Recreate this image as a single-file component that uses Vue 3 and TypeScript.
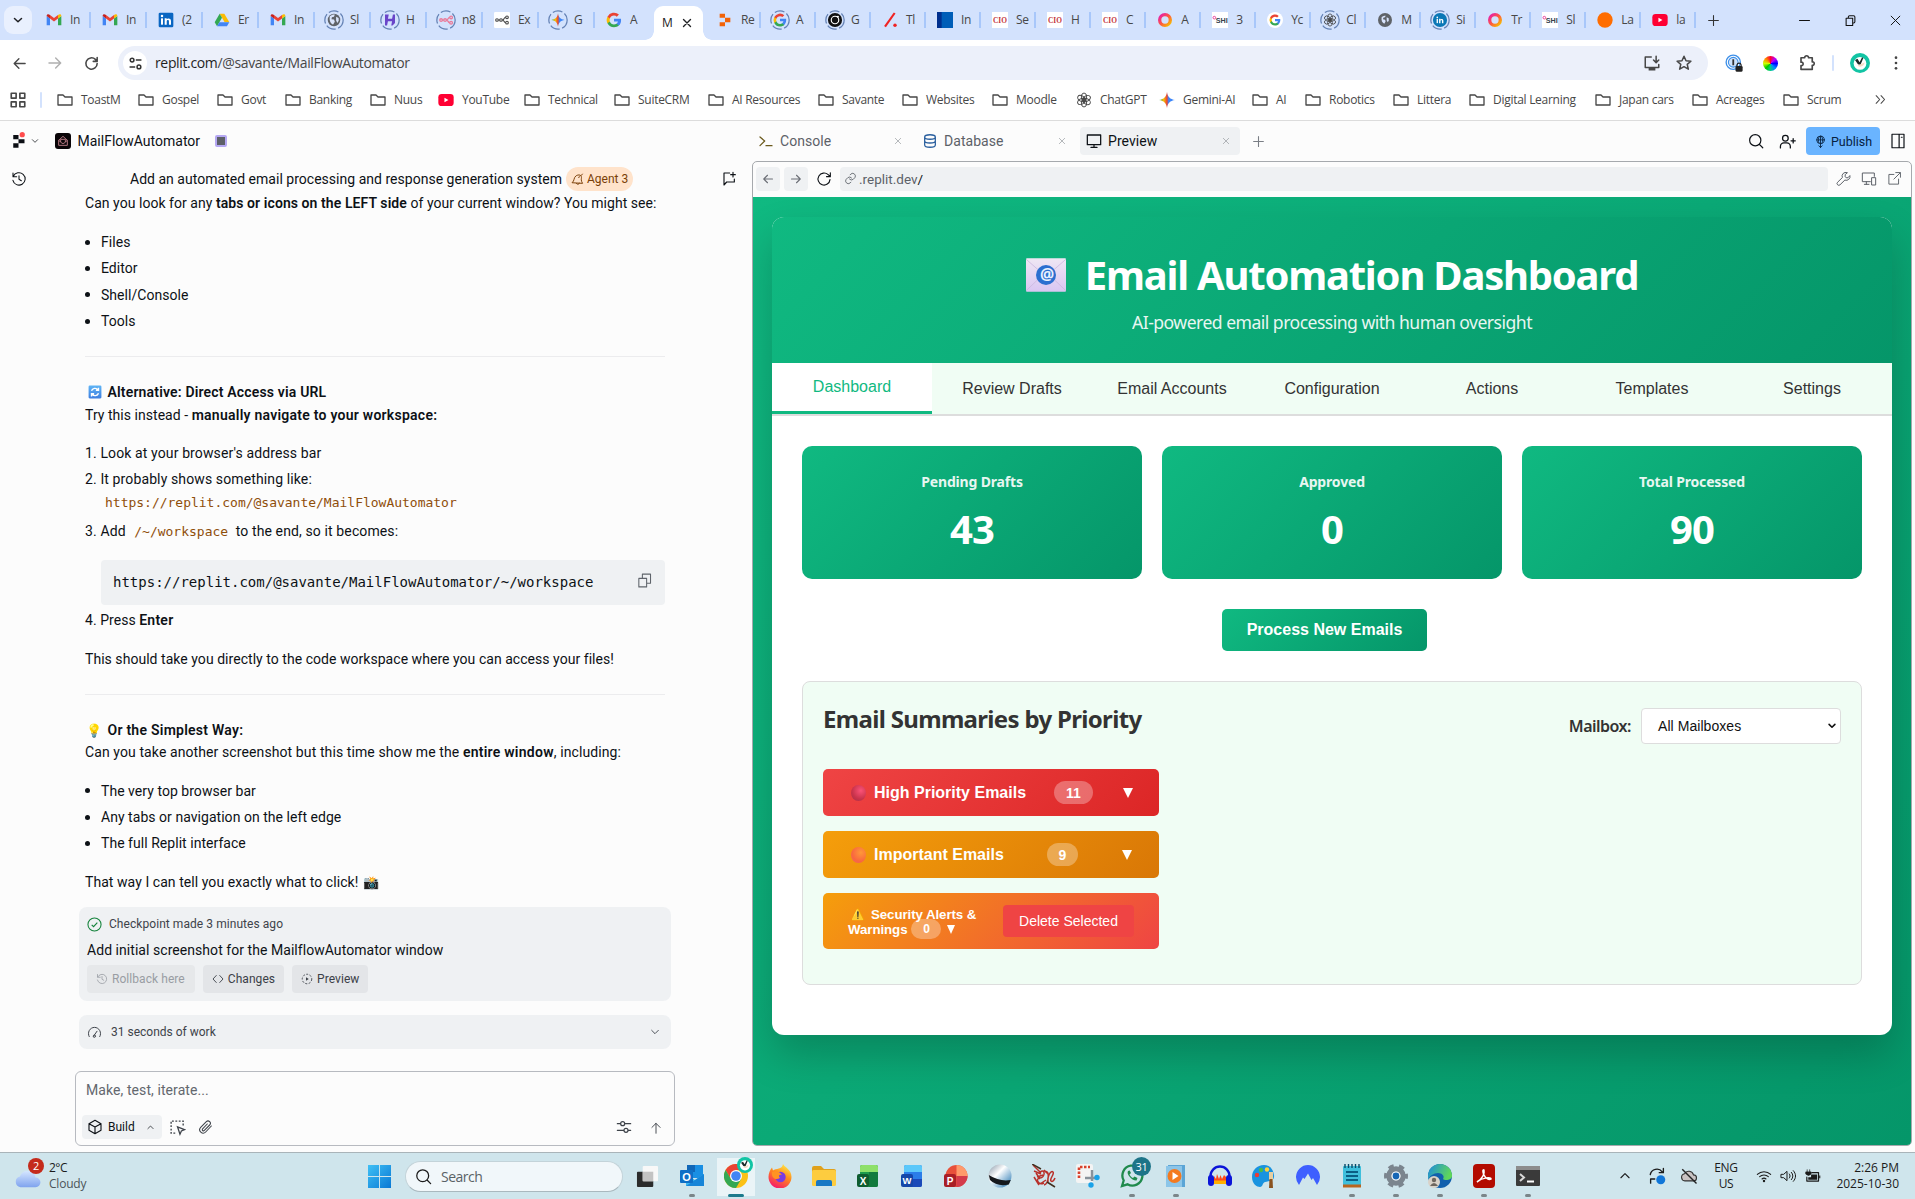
<script setup lang="ts">
import { h, type FunctionalComponent } from 'vue'

const line = (d: string, w = 1.6) =>
  `<path d="${d}" fill="none" stroke="currentColor" stroke-width="${w}" stroke-linecap="round" stroke-linejoin="round"/>`
const ring =
  '<circle cx="12" cy="12" r="11" fill="none" stroke="#6482b5" stroke-width="1.5" stroke-dasharray="12 3"/>'
const gLogo = (s: string) =>
  `<g transform="${s}"><path d="M22.6 12.2c0-.8-.1-1.500-.2-2.200H12v4.300h5.900a5 5 0 0 1-2.200 3.300v2.800h3.600c2.100-1.900 3.300-4.800 3.300-8.200z" fill="#4285f4"/><path d="M12 23c3 0 5.500-1 7.300-2.600l-3.600-2.800c-1 .7-2.300 1.100-3.700 1.100-2.900 0-5.300-1.900-6.200-4.600H2.200V17A11 11 0 0 0 12 23z" fill="#34a853"/><path d="M5.800 14.100a6.600 6.600 0 0 1 0-4.200V7H2.200a11 11 0 0 0 0 10z" fill="#fbbc05"/><path d="M12 5.400c1.600 0 3.100.6 4.200 1.600l3.200-3.100A11 11 0 0 0 2.200 7l3.600 2.900C6.700 7.300 9.100 5.400 12 5.400z" fill="#ea4335"/></g>`
const spark =
  '<defs><linearGradient id="sp" x1="0" y1="0" x2="1" y2="0"><stop offset="0" stop-color="#34a853"/><stop offset=".3" stop-color="#fbbc05"/><stop offset=".5" stop-color="#ea4335"/><stop offset=".6" stop-color="#4285f4"/><stop offset="1" stop-color="#3186ff"/></linearGradient></defs>'
const knot =
  '<g fill="none" stroke="#444" stroke-width="1.400"><ellipse cx="12" cy="7.500" rx="4" ry="6"/><ellipse cx="12" cy="7.500" rx="4" ry="6" transform="rotate(60 12 12)"/><ellipse cx="12" cy="7.500" rx="4" ry="6" transform="rotate(120 12 12)"/><ellipse cx="12" cy="7.500" rx="4" ry="6" transform="rotate(180 12 12)"/><ellipse cx="12" cy="7.500" rx="4" ry="6" transform="rotate(240 12 12)"/><ellipse cx="12" cy="7.500" rx="4" ry="6" transform="rotate(300 12 12)"/></g>'
const globeFill = (r: number) =>
  `<circle cx="12" cy="12" r="${r}" fill="#5f6368"/><path d="M7 7.500c2-1.500 4-2 6-2l-1 2.500-2.500.8L9 11l3 .5 1 2.500-2 3.500C8 16.500 6 13 7 7.500zM14.500 8l3 1.500.2 3.500-1.700 2.500-1.500-3z" fill="#d9e4fb"/>`
const txt = (x: number, y: number, s: number, c: string, t: string, f = 'Liberation Serif', extra = '') =>
  `<text x="${x}" y="${y}" font-size="${s}" font-weight="700" font-family="${f}" fill="${c}" text-anchor="middle" ${extra}>${t}</text>`
const n8n = (c: string, sw: number) =>
  `<g fill="none" stroke="${c}" stroke-width="${sw}"><circle cx="4.500" cy="12" r="2"/><circle cx="10.500" cy="12" r="2"/><circle cx="19.500" cy="8" r="2"/><circle cx="19.500" cy="16" r="2"/><path d="M6.500 12h2M12.500 12c3 0 2-4 5-4M12.500 12c3 0 2 4 5 4"/></g>`
const cio = `<rect x="0" y="0" width="24" height="24" fill="#fff"/>${txt(12, 16.5, 13, '#c4373c', 'CIO', 'Liberation Serif', 'textLength="21" lengthAdjust="spacingAndGlyphs"')}`
const shi = `<rect x="0" y="0" width="24" height="24" fill="#fff"/><circle cx="3.500" cy="8.500" r="2" fill="none" stroke="#e5218a" stroke-width="1.200"/>${txt(14.500, 16.5, 10.5, '#37424d', 'SHI', 'Liberation Sans', 'textLength="18" lengthAdjust="spacingAndGlyphs"')}`
const ringO =
  '<defs><linearGradient id="ro" x1="0" y1="0" x2="1" y2="1"><stop offset="0" stop-color="#e61bb0"/><stop offset=".5" stop-color="#ff5a3c"/><stop offset="1" stop-color="#f5c400"/></linearGradient></defs><circle cx="12" cy="12" r="8" fill="none" stroke="url(#ro)" stroke-width="5"/>'
const youtube =
  '<rect x="0.500" y="3" width="23" height="18" rx="5" fill="#ff0033"/><path d="M9.700 8.500v7l6-3.500z" fill="#fff"/>'
const linkedin = (c: string) =>
  `<rect x="1" y="1" width="22" height="22" rx="2" fill="${c}"/><rect x="4.500" y="9.500" width="3" height="9.500" fill="#fff"/><circle cx="6" cy="6" r="1.900" fill="#fff"/><path d="M10 9.500h3v1.400c1-1.700 6.500-2.400 6.500 2.600V19h-3.100v-5c0-2.700-3.300-2.400-3.300 0v5H10z" fill="#fff"/>`

const icons: Record<string, string> = {
  gmail:
    '<path d="M1 20V6l5 3.800V20z" fill="#4285f4"/><path d="M18 20V9.800L23 6v14z" fill="#34a853"/><path d="M18 4.500v5.300L23 6c0-3-2.800-3.200-5-1.500z" fill="#fbbc04"/><path d="M1 6c0-3 2.800-3.200 5-1.500v5.300z" fill="#c5221f"/><path d="M6 4.500 12 9l6-4.500v5.300L12 14.300 6 9.800z" fill="#ea4335"/>',
  linkedin: linkedin('#0a66c2'),
  drive:
    '<path d="M8.500 2.500h7L23 15.500h-7z" fill="#fbbc04"/><path d="M8.500 2.500 12 8.600 4.600 21.500 1 15.500z" fill="#34a853"/><path d="M8 15.500h15l-3.600 6H4.600z" fill="#4285f4"/>',
  globeRing: ring + globeFill(7.5),
  globe: globeFill(10.5),
  hRing: ring + '<path d="M6 5.500h4.500l-1 5h5l1-5H18v10l-3 3h-1.500l1-5h-5l-1 5H6z" fill="#6a45c9"/>',
  n8nRing: ring + '<g transform="translate(2.500 2.500) scale(.8)">' + n8n('#ea7b9a', 2) + '</g>',
  n8nBox: '<rect width="24" height="24" rx="2" fill="#fff"/>' + n8n('#444', 1.6),
  gemRing: ring + spark + '<path d="M12 4c.8 5 3 7.200 8 8-5 .8-7.200 3-8 8-.8-5-3-7.200-8-8 5-.8 7.200-3 8-8z" fill="url(#sp)"/>',
  gemini: spark + '<path d="M12 0c1.200 7.500 4.500 10.800 12 12-7.500 1.200-10.800 4.500-12 12C10.800 16.500 7.500 13.200 0 12 7.500 10.800 10.800 7.500 12 0z" fill="url(#sp)"/>',
  google: gLogo(''),
  googleRing: ring + gLogo('translate(3.6 3.600) scale(.7)'),
  googleWhite: '<circle cx="12" cy="12" r="12" fill="#fff"/>' + gLogo('translate(3 3) scale(.75)'),
  replit: '<path d="M4 2.500h8v6.300H4zM12 8.800h8v6.400h-8zM4 15.200h8v6.300H4z" fill="#f26207"/>',
  lens: ring + '<circle cx="12" cy="12" r="8.500" fill="#111"/><circle cx="12" cy="12" r="4.500" fill="none" stroke="#fff" stroke-width="1.400"/><circle cx="15.500" cy="8" r="1.200" fill="#fff"/>',
  slash: '<path d="M19 1.500 4.500 22" stroke="#f02323" stroke-width="3.200"/><circle cx="19.500" cy="20" r="2.600" fill="#f02323"/>',
  blue: '<rect width="24" height="24" fill="#005eb8"/><rect width="7" height="24" fill="#00308f"/>',
  cio,
  shi,
  ringO,
  gptRing: ring + `<g transform="translate(3.600 3.600) scale(.7)">${knot}</g>`,
  gpt: knot,
  liRing: ring + `<circle cx="12" cy="12" r="8.500" fill="#0a77b5"/><g transform="translate(5.500 5.500) scale(.54)">${linkedin('none')}</g>`,
  orange: '<circle cx="12" cy="12" r="11.500" fill="#ff6d00"/>',
  youtube,
  down: line('m6 9.500 6 5.500 6-5.500', 2.6),
  chev: line('m4 8 8 8 8-8', 2.2),
  chevUp: line('m5 15 7-7 7 7', 1.9),
  close: line('M5 5l14 14M19 5 5 19', 2.800),
  closeThin: line('M4 4l16 16M20 4 4 20', 1.8),
  plus: line('M12 3v18M3 12h18', 2),
  min: line('M4 12h16', 1.6),
  restore: line('M5 8.500h10.500V20H5zM8.500 8V6.500Q8.500 4.500 10.500 4.500H17q2 0 2 2V14q0 2-2 2', 1.7),
  back: line('M21 12H4M11 4.500 3.500 12l7.500 7.500', 2.2),
  fwd: line('M3 12h17M13 4.500l7.500 7.500-7.500 7.500', 2.2),
  reload: line('M20 12a8 8 0 1 1-2.500-5.800L20 9M20 3.500V9h-5.500', 2.2),
  reloadThin: line('M21 13a9 9 0 1 1-2.800-7.500L21.500 8.500M21.500 2.800v5.700h-5.700', 1.7),
  tune: '<g fill="none" stroke="#333" stroke-width="2.400"><circle cx="6.500" cy="6.500" r="3"/><path d="M12.500 6.500h9M2.500 17.500h9"/><circle cx="17.500" cy="17.500" r="3"/></g>',
  folder: line('M1.500 19.500v-15h7.500l3 3h10.500v12z', 2),
  grid: line('M3 3h6.500v6.500H3zM14.500 3H21v6.500h-6.500zM3 14.500h6.500V21H3zM14.500 14.500H21V21h-6.500z', 2.2),
  install: line('M11 4H3v14h18v-4M17.500 3v8M14 8l3.500 3.500L21 8', 2) + '<path d="M7.500 18h9v4h-9z" fill="currentColor"/>',
  star: line('m12 3 2.700 6 6.500.6-4.900 4.300 1.500 6.400L12 16.900l-5.800 3.400 1.500-6.400-4.900-4.300 6.500-.6z', 2),
  onepass: '<circle cx="11" cy="11" r="9.500" fill="#fff" stroke="#3d8fe8" stroke-width="1.800"/><circle cx="11" cy="11" r="6.500" fill="#cfe3fb" stroke="#3d8fe8" stroke-width="1.400"/><path d="M11 7v8" stroke="#333" stroke-width="2.400"/><rect x="14" y="16" width="9.500" height="7.500" rx="1.500" fill="#222"/><path d="M16 16v-1.500a2.800 2.800 0 0 1 5.500 0V16" fill="none" stroke="#222" stroke-width="1.600"/>',
  puzzle: line('M4 5h5c-.8-3.500 5.800-3.500 5 0h5v5.500c3.500-.8 3.500 5.300 0 4.500V20.500H4V15.500c3.800.8 3.800-5.300 0-4.500z', 2.2),
  dots: '<circle cx="12" cy="4" r="2" fill="#444"/><circle cx="12" cy="12" r="2" fill="#444"/><circle cx="12" cy="20" r="2" fill="#444"/>',
  more: line('m4 5 6.500 7L4 19M13 5l6.500 7-6.500 7', 2),
  avatar: '<circle cx="12" cy="12" r="12" fill="#12c4a4"/><circle cx="12" cy="12.500" r="7.600" fill="#fff"/><path d="M6 8.500 9 7l2.500 4L14.500 5l1.500 1-3.500 8.500-3-1z" fill="#1c2c2a"/><path d="M9 15c3 3 8 1 8.500-3.500L14 13z" fill="#f6dcc6"/>',
  replitDark: '<path d="M3 4h7v5.500H3zM10 9.500h8v5.500h-8zM3 15h7v6H3z" fill="#0c0f14"/><circle cx="15" cy="3.500" r="3.500" fill="#ff4d4d"/>',
  mailBox: '<rect width="24" height="24" rx="4.500" fill="#0a0508"/><path d="M5.500 11 12 5l6.500 6v7.500h-13zM5.500 11l3 2.500v-4h7v4l3-2.500M8.500 14l3.500 2 3.500-2" fill="none" stroke="#d9909c" stroke-width="1.200"/>',
  console: line('m3 6 7 6-7 7M12 19h9', 1.9),
  db: line('M4 6c0-4.500 16-4.500 16 0s-16 4.500-16 0v12c0 4.500 16 4.500 16 0V6M4 12c0 4 16 4 16 0', 1.9),
  monitor: line('M2 3h20v14.500H2zM12 17.500v4M7.500 21.700h9', 1.9),
  search: line('M18.500 11a7.500 7.500 0 1 1-15 0 7.500 7.500 0 0 1 15 0M16.500 16.500 21 21', 1.6),
  userPlus: line('M13 7.500a4 4 0 1 1-8 0 4 4 0 0 1 8 0M2 21v-2a5 5 0 0 1 5-5h4a5 5 0 0 1 5 5v2M20 8v6M17 11h6', 1.8),
  publish: line('M19 9a7 7 0 1 1-14 0 7 7 0 0 1 14 0M5 9h14M12 2v21M9 14.500C7.500 11 7.500 6 10 2.500M15 14.500C16.500 11 16.500 6 14 2.500M9 20l3 3 3-3', 1.6),
  sidebar: line('M4 3h16v18H4zM13.500 3v18M16.500 7h1', 1.6),
  history: line('M3.500 8a9.300 9.300 0 1 1-.6 6M3 3v5.500h5.500M12 7v5.500l3.500 2', 1.6),
  chatPlus: line('M13 3H4.500v18l4-4.500H20V12M18 2v7M14.500 5.500h7', 1.7),
  bell: line('M10 19.500c2 2.500 5 1.500 5.500-.9M2.500 17.500C7 14 4.500 9 9 5.500c2-1.500 5-2.500 8-1.500 3.500 2.500 2 6 2 8.500 0 2.500 1 4 2 6zM19 4.500 21 2M14 8l2-1', 1.8),
  copy: line('M4 9h11v12H4zM9 8.500V3h11.500v13H16', 1.5),
  check: '<circle cx="12" cy="12" r="10.500" fill="none" stroke="#14833b" stroke-width="1.700"/><path d="m7.500 12.500 3 3 6-6.500" fill="none" stroke="#14833b" stroke-width="1.800"/>',
  code: line('M8.500 5 2 12l6.500 7M15.500 5l6.500 7-6.500 7', 1.8),
  playDash: '<circle cx="12" cy="12" r="9.500" fill="none" stroke="currentColor" stroke-width="1.800" stroke-dasharray="4 3"/><path d="M10 8.500v7l5.500-3.500z" fill="currentColor"/>',
  gauge: line('M3.500 18.500a9.800 9.800 0 1 1 17 0M11.500 16.500 16 10M13.500 17.500a1.800 1.800 0 1 1-3.500 0 1.800 1.800 0 0 1 3.500 0', 1.6),
  cube: line('M12 2 21 7v10l-9 5-9-5V7zM3 7l9 5 9-5M12 12v10', 1.7),
  select: '<path d="M20 9V3H3v17h6" fill="none" stroke="currentColor" stroke-width="1.900" stroke-dasharray="2.600 2.200"/><path d="m12 11 10 4-4.500 2-2 4.500z" fill="none" stroke="currentColor" stroke-width="1.800"/>',
  clip: line('m20 10.500-8.500 9A5 5 0 0 1 4 12.500L12.500 4a3.400 3.400 0 0 1 5 5l-8 8.200a1.700 1.700 0 0 1-2.600-2.400l7-7.300', 1.600),
  sliders: line('M2 7h5M13 7h9M13 7a3 3 0 1 1-6 0 3 3 0 0 1 6 0M2 17h10M18 17h4M18 17a3 3 0 1 1-6 0 3 3 0 0 1 6 0', 1.8),
  up: line('M12 21V4M5 11l7-7 7 7', 1.6),
  link: line('M10 13a5 5 0 0 0 7 .5l3-3a5 5 0 0 0-7-7l-1.700 1.700M14 11a5 5 0 0 0-7-.5l-3 3a5 5 0 0 0 7 7l1.700-1.700', 1.6),
  wrench: line('M14.700 6.300v3l1.500 1.500h3l3-3.500a6 6 0 0 1-8 7.200L6.500 22a2.500 2.500 0 0 1-4-4l7.700-7.500a6 6 0 0 1 7.500-8z', 1.6),
  devices: line('M14 16H2V3h18v5M8 16v4M5 20h7M16.500 10h5.500v11h-5.500z', 1.5),
  external: line('M18.500 13v8H3V5.500h8M14 2.500h7.500V10M21 3 11 13', 1.5),
  caret: line('m5 8 7 7 7-7', 3.8),
  recycle: '<defs><linearGradient id="rc" x1="0" y1="0" x2="0" y2="1"><stop offset="0" stop-color="#5fb4f5"/><stop offset="1" stop-color="#3f7fe0"/></linearGradient></defs><rect x="1" y="1" width="22" height="22" rx="2" fill="url(#rc)"/><path d="M6 10a6.500 6.500 0 0 1 11-2M18 4.500V9h-4.500M18 14a6.500 6.500 0 0 1-11 2M6 19.500V15h4.500" fill="none" stroke="#fff" stroke-width="2.400"/>',
  envelope: '<defs><linearGradient id="en" x1="0" y1="0" x2="0" y2="1"><stop offset="0" stop-color="#efe7f4"/><stop offset="1" stop-color="#d9c6f2"/></linearGradient></defs><rect x="0" y="2" width="24" height="20" rx=".6" fill="url(#en)"/><path d="M0 2.500 12 13 24 2.500M0 21.500 10 12M24 21.500 14 12" fill="none" stroke="#cbb8de" stroke-width=".5"/><circle cx="12" cy="12" r="6" fill="#2b6fd0"/>' + '<text x="12" y="14.900" font-size="9.500" font-family="Open Sans" fill="#e9f1ff" text-anchor="middle">@</text>',
  // taskbar
  win: '<defs><linearGradient id="wn" x1="0" y1="0" x2="1" y2="1"><stop offset="0" stop-color="#3fc0f5"/><stop offset="1" stop-color="#0a78d4"/></linearGradient></defs><path d="M0 0h11.500v11.500H0zM12.500 0H24v11.500H12.500zM0 12.500h11.500V24H0zM12.500 12.500H24V24H12.500z" fill="url(#wn)"/>',
  taskview: '<rect x="1" y="7" width="17" height="16" rx="1" fill="#2b2b2b"/><rect x="7" y="1" width="16" height="16" rx="1" fill="#f8f8f8"/><path d="M7 7h11v10H7z" fill="#c3c3c3"/>',
  outlook: '<rect x="7" y="1" width="16" height="13" fill="#1a8fe3"/><path d="M7 1h8v7H7z" fill="#1067b8"/><path d="M6 10l9 6 9-6v12H6z" fill="#35b4f0"/><path d="M6 22 24 10v12z" fill="#1785d8"/><rect x="0" y="6" width="13" height="13" rx="1" fill="#0f6fc6"/>' + txt(6.5, 16.5, 11, '#fff', 'O', 'Liberation Sans'),
  chrome: '<circle cx="12" cy="12" r="12" fill="#fbc116"/><path d="M12 6h10.400A12 12 0 0 0 1.600 6L7 15z" fill="#ea4335"/><path d="M1.600 6A12 12 0 0 0 12 24l5.200-9L7 15z" fill="#34a853"/><circle cx="12" cy="12" r="6" fill="#fff"/><circle cx="12" cy="12" r="4.800" fill="#4285f4"/>',
  firefox: '<defs><linearGradient id="ff" x1=".8" y1="0" x2=".3" y2="1"><stop offset="0" stop-color="#fff04a"/><stop offset=".45" stop-color="#ff8a1c"/><stop offset="1" stop-color="#f5156c"/></linearGradient></defs><path d="M15 0c1 3 8.500 5 8.500 13A11.500 11.500 0 0 1 .5 13C.5 9 2 6 4 3.500l1 3C8 4 14 6 15 0z" fill="url(#ff)"/><circle cx="12.500" cy="13" r="5.200" fill="#7a3be0"/><path d="M4 8c4-2 8 0 10 3-3-1-4 1-2 3-5 3-9-1-8-6z" fill="#ff9322"/>',
  explorer: '<path d="M0 4a2 2 0 0 1 2-2h7l3 3h10a2 2 0 0 1 2 2v14H0z" fill="#e0a11b"/><rect y="6" width="24" height="16" rx="1.500" fill="#fdcc3f"/><path d="M4 22v-4q0-2 2-2h12q2 0 2 2v4z" fill="#1878c4"/>',
  excel: '<rect x="4" y="1" width="18" height="22" rx="2" fill="#1d9a4c"/><path d="M4 3q0-2 2-2h7v7H4zM13 1h7q2 0 2 2v5h-9z" fill="#8ee06a"/><path d="M13 8h9v13q0 2-2 2h-7z" fill="#127a3d"/><rect x="1" y="10" width="12" height="13" rx="2" fill="#0e5c2f"/>' + txt(7, 20.5, 10, '#fff', 'X', 'Liberation Sans'),
  word: '<rect x="4" y="1" width="18" height="22" rx="2" fill="#2b7de9"/><path d="M4 3q0-2 2-2h14q2 0 2 2v5H4z" fill="#5cc8fa"/><path d="M4 15h18v6q0 2-2 2H6z" fill="#1b49b8"/><rect x="1" y="10" width="12" height="13" rx="2" fill="#1546a8"/>' + txt(7, 20, 9.5, '#fff', 'W', 'Liberation Sans'),
  ppt: '<circle cx="12.500" cy="12" r="11" fill="#e8503a"/><path d="M12.500 1a11 11 0 0 1 11 11h-11z" fill="#ff9a6b"/><path d="M12.500 12h11a11 11 0 0 1-11 11z" fill="#d43b4b"/><rect x="0" y="10" width="12" height="13" rx="2" fill="#a81e26"/>' + txt(6, 20.5, 10, '#fff', 'P', 'Liberation Sans'),
  ball: '<defs><linearGradient id="bl" x1="0" y1="0" x2="1" y2="1"><stop offset="0" stop-color="#8494a5"/><stop offset=".4" stop-color="#fff"/><stop offset="1" stop-color="#1a6fae"/></linearGradient></defs><circle cx="12" cy="12" r="11.500" fill="url(#bl)"/><path d="M.8 11q11 7 22 5l-2 4.500Q9 23 2 16z" fill="#15181c"/>',
  scribble: '<g fill="none" stroke="#b8302a" stroke-width="1.500"><path d="M1 1l8 8M4 9l4 6M2 13l5 8M2 7l7 3M5 13l6-2M8 8c6-4 5 6 0 6s-2 8 4 5M13 8c5-3 4 12-1 13M16 18c-1-6 3-12 5-10s-4 7-2 9 4-3 4-3M12 6l5 5M8 20l6-4"/></g><path d="M0 0l9 5M15 18l8 5" stroke="#403020" stroke-width="1.500"/>',
  snip: '<rect x="0" y="0" width="17" height="19" rx="2" fill="#f4f4f4"/><path d="M3 14V3h11" fill="none" stroke="#d8402b" stroke-width="2.600" stroke-dasharray="2.500 1.500"/><path d="M16 6v11M9 14h10" stroke="#88929b" stroke-width="2.400"/><circle cx="21" cy="13.500" r="2.700" fill="#19a2e8"/><circle cx="15" cy="21" r="2.700" fill="#19a2e8"/>',
  whatsapp: '<path d="M2 22l1.700-5.500A10 10 0 1 1 7.500 20.300z" fill="none" stroke="#1f8a4c" stroke-width="2.300"/><path d="M8 7c-2 3 4 10 8.500 9.500l1-2.500-3-1.500-1.500 1.500c-1.500-.6-3-2-3.500-3.500L11 9 9.700 6.500z" fill="#1f8a4c"/>',
  media: '<path d="M4 1h17v22H4z" fill="#5ba5d6"/><path d="M2 2h16v21H2z" fill="#8cc5e8"/><circle cx="10.500" cy="12" r="7" fill="#f47a1f"/><path d="M8.500 8v8l6-4z" fill="#fff"/>',
  audacity: '<path d="M6 20V12l2 3 1-5 2 5 1.500-4 1.500 4 2-4 2 2v7z" fill="#ff4a1a"/><path d="M6 20v-3.500h12V20z" fill="#ffb000"/><path d="M2.500 16v-4a9.500 9.500 0 0 1 19 0v4" fill="none" stroke="#0b14d8" stroke-width="2.400"/><rect x="0" y="11" width="6" height="11" rx="3" fill="#0b14d8"/><rect x="18" y="11" width="6" height="11" rx="3" fill="#0b14d8"/>',
  paint: '<path d="M12 1C5 1 0 6 0 13s5 10 8 10 2-4 5-5 10 0 9-7S17 1 12 1z" fill="#1993e0"/><circle cx="5" cy="11" r="2.200" fill="#ec3b33"/><circle cx="9" cy="6" r="2.200" fill="#49b94b"/><circle cx="15" cy="5.500" r="2.200" fill="#ffd23d"/><path d="M17 8h4v8h-4z" fill="#e8cfa0"/><path d="M17.500 15h3l.5 9h-4z" fill="#8a5320"/>',
  nord: '<path d="M3 21A12 12 0 1 1 21 21l-4-7-1.500 2L12 9.500 8.500 15 7 13.500z" fill="#3e5fff"/>',
  notepad: '<rect x="3" y="2" width="18" height="21" rx="1" fill="#3fbfdc"/><path d="M3 20.500h18v3H3z" fill="#b8651f"/><path d="M6 8h12M6 12h12M6 16h12" stroke="#0a5e84" stroke-width="1.800"/><path d="M5 0v4M8.500 0v4M12 0v4M15.500 0v4M19 0v4" stroke="#0a4a68" stroke-width="1.400"/>',
  gear: '<circle cx="12" cy="12" r="7" fill="none" stroke="#7b858e" stroke-width="5.500"/><circle cx="12" cy="12" r="10.300" fill="none" stroke="#7b858e" stroke-width="3.400" stroke-dasharray="5.400 5.390" stroke-dashoffset="2.700"/><circle cx="12" cy="12" r="4" fill="#1766b5" stroke="#fff" stroke-width="1.200"/>',
  edge: '<defs><linearGradient id="eg" x1="0" y1="0" x2="1" y2=".3"><stop offset="0" stop-color="#1b8be0"/><stop offset="1" stop-color="#5fd65a"/></linearGradient></defs><circle cx="12" cy="12" r="12" fill="#1160ad"/><path d="M0 12a12 12 0 0 1 24 0c0 4-7 5-9 3 2-3-1-6-5-6s-9 3-10 7z" fill="url(#eg)"/><circle cx="6" cy="18" r="6" fill="#d9d2c8"/><circle cx="6" cy="16" r="2.200" fill="#6d665f"/><path d="M2 22q4-6 8 0z" fill="#6d665f"/>',
  acrobat: '<rect x="1" y="0" width="22" height="24" rx="4" fill="#b30b00"/><path d="M5 18c5-3 8-8 7-12-1.500-1-1.500 2 0 5 2 4 5 5 7 4 .5-2-8-2-14 3z" fill="none" stroke="#fff" stroke-width="1.500"/>',
  terminal: '<rect x="0" y="2" width="24" height="20" rx="1" fill="#3a3a3a"/><path d="M0 2h24v4H0z" fill="#8d8d8d"/><path d="m4 10 4 3.500L4 17" fill="none" stroke="#d8d8d8" stroke-width="2"/><path d="M11 17.500h7" stroke="#fff" stroke-width="2"/>',
  sync: line('M3 10a9 9 0 0 1 16-3.500M20.500 2v5.500h-5.500M3.500 21.500V16H9', 1.8) + '<circle cx="17" cy="17" r="6" fill="#1176d8"/>',
  cloudOff: '<path d="M6.500 18.500a4.800 4.800 0 0 1-.5-9.500 6.500 6.500 0 0 1 12 1.500 4 4 0 0 1 0 8z" fill="#c9c2c2" stroke="#333" stroke-width="1.500"/><path d="M3 3l19 19" stroke="#222" stroke-width="1.800"/>',
  wifi: line('M2 9.500a14.500 14.500 0 0 1 20 0M5.500 13a9.500 9.500 0 0 1 13 0M9 16.500a4.500 4.500 0 0 1 6 0', 1.6) + '<circle cx="12" cy="19.500" r="1.800" fill="currentColor"/>',
  sound: line('M2 9.500h3.500L10.500 5v14l-5-4.500H2zM14 9c1.500 2 1.500 4 0 6M17 6.500c3 3.500 3 7.500 0 11M20 4c4.500 5 4.500 11 0 16', 1.5),
  battery: line('M11 6.500h9.500v12H4V13', 1.7) + '<path d="M10 9h8.500v7.500H6V13h4z" fill="currentColor"/><path d="M21.500 10.500h1.500v4h-1.500z" fill="currentColor"/><path d="M4.500 2v4M8 2v4M2.500 5.500h7.500v3q-3.500 4-7.500 0z" fill="currentColor" stroke="currentColor"/>',
  cloud: '<defs><linearGradient id="cl" x1="0" y1="0" x2="0" y2="1"><stop offset="0" stop-color="#d5e6ff"/><stop offset="1" stop-color="#7fa3ee"/></linearGradient></defs><path d="M5 20.500a5 5 0 0 1-.5-9.800 7.500 7.500 0 0 1 14.500.8 4.500 4.500 0 0 1 0 9z" fill="url(#cl)"/>',
}

const Icon: FunctionalComponent<{ name: string; size?: number }> = (p) =>
  h('svg', { viewBox: '0 0 24 24', width: p.size ?? 16, height: p.size ?? 16, class: 'icon', innerHTML: icons[p.name] })
Icon.props = ['name', 'size']

interface Tab { icon: string; label: string; size?: number }
const leftTabs: Tab[] = [
  { icon: 'gmail', label: 'In' }, { icon: 'gmail', label: 'In' }, { icon: 'linkedin', label: '(2' },
  { icon: 'drive', label: 'Er' }, { icon: 'gmail', label: 'In' }, { icon: 'globeRing', label: 'Sl', size: 20 },
  { icon: 'hRing', label: 'H', size: 20 }, { icon: 'n8nRing', label: 'n8', size: 20 }, { icon: 'n8nBox', label: 'Ex' },
  { icon: 'gemRing', label: 'G', size: 20 }, { icon: 'google', label: 'A' },
]
const rightTabs: Tab[] = [
  { icon: 'replit', label: 'Re' }, { icon: 'googleRing', label: 'A', size: 20 }, { icon: 'lens', label: 'G', size: 20 },
  { icon: 'slash', label: 'Tl' }, { icon: 'blue', label: 'In' }, { icon: 'cio', label: 'Se' }, { icon: 'cio', label: 'H' },
  { icon: 'cio', label: 'C' }, { icon: 'ringO', label: 'A' }, { icon: 'shi', label: '3' }, { icon: 'googleWhite', label: 'Yc' },
  { icon: 'gptRing', label: 'Cl', size: 20 }, { icon: 'globe', label: 'M' }, { icon: 'liRing', label: 'Si', size: 20 },
  { icon: 'ringO', label: 'Tr' }, { icon: 'shi', label: 'Sl' }, { icon: 'orange', label: 'La' }, { icon: 'youtube', label: 'la' },
]
const bookmarks: [string, number, string?][] = [
  ['ToastM', 81], ['Gospel', 79], ['Govt', 68], ['Banking', 85], ['Nuus', 68], ['YouTube', 86, 'youtube'],
  ['Technical', 90], ['SuiteCRM', 94], ['AI Resources', 110], ['Savante', 84], ['Websites', 90], ['Moodle', 84],
  ['ChatGPT', 83, 'gpt'], ['Gemini-AI', 93, 'gemini'], ['AI', 53], ['Robotics', 88], ['Littera', 76],
  ['Digital Learning', 126], ['Japan cars', 97], ['Acreages', 91], ['Scrum', 70],
]
const navTabs = ['Dashboard', 'Review Drafts', 'Email Accounts', 'Configuration', 'Actions', 'Templates', 'Settings']
const stats: [string, number][] = [['Pending Drafts', 43], ['Approved', 0], ['Total Processed', 90]]
const apps: { icon: string; state?: string }[] = [
  { icon: 'outlook', state: 'run' }, { icon: 'chrome', state: 'active' }, { icon: 'firefox' }, { icon: 'explorer' },
  { icon: 'excel' }, { icon: 'word' }, { icon: 'ppt' }, { icon: 'ball' }, { icon: 'scribble' }, { icon: 'snip' },
  { icon: 'whatsapp', state: 'run' }, { icon: 'media', state: 'run' }, { icon: 'audacity' }, { icon: 'paint' },
  { icon: 'nord' }, { icon: 'notepad', state: 'run' }, { icon: 'gear', state: 'run' }, { icon: 'edge', state: 'run' },
  { icon: 'acrobat', state: 'run' }, { icon: 'terminal', state: 'run' },
]
</script>

<template>
  <div class="screen">
    <header class="strip">
      <button class="tab-search"><Icon name="down" :size="14" /></button>
      <div class="tabs-left">
        <div v-for="(t, i) in leftTabs" :key="i" class="btab">
          <span class="fav"><Icon :name="t.icon" :size="t.size ?? 16" /></span><span class="lbl">{{ t.label }}</span>
        </div>
      </div>
      <div class="btab-active"><span class="lbl">M</span><Icon name="close" :size="12" /></div>
      <div class="tabs-right">
        <div v-for="(t, i) in rightTabs" :key="i" class="btab">
          <span class="fav"><Icon :name="t.icon" :size="t.size ?? 16" /></span><span class="lbl">{{ t.label }}</span>
        </div>
      </div>
      <Icon class="new-tab" name="plus" :size="13" />
      <div class="win-ctl"><Icon name="min" :size="15" /><Icon name="restore" :size="15" /><Icon name="closeThin" :size="13" /></div>
    </header>

    <div class="toolbar">
      <div class="nav-btns"><Icon name="back" :size="15" /><Icon name="fwd" class="dim" /><Icon name="reload" :size="17" /></div>
      <div class="omni">
        <span class="site"><Icon name="tune" :size="15" /></span>
        <span class="url"><b>replit.com</b>/@savante/MailFlowAutomator</span>
        <Icon name="install" :size="18" /><Icon name="star" :size="18" />
      </div>
      <div class="ext">
        <span class="cell"><Icon name="onepass" :size="18" /></span><span class="cell"><i class="wheel"></i></span>
        <span class="cell"><Icon name="puzzle" :size="18" /></span>
      </div>
      <i class="vsep"></i>
      <Icon class="ava" name="avatar" :size="20" /><Icon class="kebab" name="dots" :size="16" />
    </div>

    <div class="bookmarks">
      <Icon class="apps-grid" name="grid" :size="18" /><i class="vsep"></i>
      <div v-for="b in bookmarks" :key="b[0]" class="bm" :style="{ width: b[1] + 'px' }">
        <Icon :name="b[2] ?? 'folder'" /><span>{{ b[0] }}</span>
      </div>
      <Icon class="bm-more" name="more" :size="13" />
    </div>

    <main class="work">
      <section class="left">
        <div class="proj">
          <Icon name="replitDark" :size="18" /><Icon class="pchev" name="chev" :size="8" />
          <Icon class="papp" name="mailBox" /><span class="pname">MailFlowAutomator</span><i class="chip"></i>
        </div>
        <div class="chat-head">
          <Icon name="history" :size="16" /><span class="ctitle">Add an automated email processing and response generation system</span>
          <span class="agent"><Icon name="bell" :size="13" />Agent 3</span><Icon class="newchat" name="chatPlus" />
        </div>
        <article class="msg">
          <p class="p1">Can you look for any <b>tabs or icons on the LEFT side</b> of your current window? You might see:</p>
          <ul class="l1"><li>Files</li><li>Editor</li><li>Shell/Console</li><li>Tools</li></ul>
          <hr class="h1" />
          <p class="p2"><Icon name="recycle" :size="14" /><b>Alternative: Direct Access via URL</b></p>
          <p class="p3">Try this instead - <b>manually navigate to your workspace:</b></p>
          <ol>
            <li>1. Look at your browser's address bar</li>
            <li>2. It probably shows something like:</li>
            <li class="code-line"><code>https://replit.com/@savante/MailFlowAutomator</code></li>
            <li class="l3">3. Add <code>/~/workspace</code> to the end, so it becomes:</li>
          </ol>
          <div class="codeblock"><code>https://replit.com/@savante/MailFlowAutomator/~/workspace</code><Icon name="copy" :size="17" /></div>
          <p class="p4">4. Press <b>Enter</b></p>
          <p class="p5">This should take you directly to the code workspace where you can access your files!</p>
          <hr class="h2" />
          <p class="p6"><span class="em">💡</span><b>Or the Simplest Way:</b></p>
          <p class="p7">Can you take another screenshot but this time show me the <b>entire window</b>, including:</p>
          <ul class="l2"><li>The very top browser bar</li><li>Any tabs or navigation on the left edge</li><li>The full Replit interface</li></ul>
          <p class="p8">That way I can tell you exactly what to click! <span class="em2">📸</span></p>
        </article>
        <div class="checkpoint">
          <div class="ck-top"><Icon name="check" :size="15" /><span>Checkpoint made 3 minutes ago</span></div>
          <div class="ck-title">Add initial screenshot for the MailflowAutomator window</div>
          <div class="ck-btns">
            <button class="off"><Icon name="history" :size="12" />Rollback here</button>
            <button><Icon name="code" :size="12" />Changes</button>
            <button><Icon name="playDash" :size="12" />Preview</button>
          </div>
        </div>
        <div class="worked"><Icon name="gauge" :size="15" /><span>31 seconds of work</span><Icon name="chev" :size="10" /></div>
        <div class="composer">
          <div class="ph">Make, test, iterate...</div>
          <div class="c-row">
            <span class="build"><Icon name="cube" />Build<Icon class="cu" name="chevUp" :size="9" /></span>
            <Icon class="ci1" name="select" :size="17" /><Icon class="ci2" name="clip" :size="16" />
            <Icon class="ci3" name="sliders" :size="16" /><Icon class="ci4" name="up" :size="14" />
          </div>
        </div>
      </section>

      <section class="right">
        <div class="ide-tabs">
          <div class="itab"><Icon name="console" class="c-con" /><span>Console</span><Icon name="closeThin" :size="8" /></div>
          <div class="itab"><Icon name="db" class="c-db" /><span>Database</span><Icon name="closeThin" :size="8" /></div>
          <div class="itab on"><Icon name="monitor" /><span>Preview</span><Icon name="closeThin" :size="8" /></div>
          <Icon class="iplus" name="plus" :size="13" />
          <div class="iright">
            <Icon name="search" :size="18" /><Icon name="userPlus" :size="17" />
            <button class="publish"><Icon name="publish" :size="13" />Publish</button><Icon name="sidebar" :size="18" />
          </div>
        </div>
        <div class="frame">
          <div class="fbar">
            <span class="sq"><Icon name="back" :size="12" /></span><span class="sq"><Icon name="fwd" :size="12" /></span>
            <Icon class="frel" name="reloadThin" :size="16" />
            <div class="faddr"><Icon name="link" :size="13" /><span>.replit.dev<b>/</b></span></div>
            <div class="ficons"><Icon name="wrench" :size="15" /><Icon name="devices" :size="16" /><Icon name="external" :size="15" /></div>
          </div>
          <div class="page">
            <div class="card">
              <div class="hero">
                <h1><Icon class="hero-em" name="envelope" :size="40" />Email Automation Dashboard</h1>
                <p>AI-powered email processing with human oversight</p>
              </div>
              <nav class="nav"><a v-for="(n, i) in navTabs" :key="n" :class="{ on: i === 0 }">{{ n }}</a></nav>
              <div class="body">
                <div class="stats">
                  <div v-for="s in stats" :key="s[0]" class="stat"><h3>{{ s[0] }}</h3><div class="num">{{ s[1] }}</div></div>
                </div>
                <div class="proc"><button>Process New Emails</button></div>
                <div class="summ">
                  <div class="s-head">
                    <h2>Email Summaries by Priority</h2>
                    <div class="mb"><label>Mailbox:</label><div class="sel"><span>All Mailboxes</span><Icon name="caret" :size="10" /></div></div>
                  </div>
                  <div class="row high"><i class="dot"></i><span class="rt">High Priority Emails</span><span class="cnt">11</span><span class="arr"></span></div>
                  <div class="row imp"><i class="dot"></i><span class="rt">Important Emails</span><span class="cnt">9</span><span class="arr"></span></div>
                  <div class="row sec">
                    <div class="sec-t"><div class="s1"><span class="warn">⚠️</span>Security Alerts &amp;</div><div class="s2">Warnings<span class="cnt">0</span><span class="arr"></span></div></div>
                    <button>Delete Selected</button>
                  </div>
                </div>
              </div>
            </div>
          </div>
        </div>
      </section>
    </main>

    <footer class="taskbar">
      <div class="weather"><span class="wic"><Icon name="cloud" :size="26" /><em>2</em></span><div><b>2°C</b><span>Cloudy</span></div></div>
      <div class="start"><Icon name="win" :size="23" /></div>
      <div class="tsearch"><Icon name="search" :size="19" /><span>Search</span></div>
      <span class="tv"><Icon name="taskview" :size="23" /></span>
      <div class="apps">
        <div v-for="a in apps" :key="a.icon" class="app" :class="a.state">
          <Icon :name="a.icon" :size="24" />
          <Icon v-if="a.icon === 'chrome'" class="prof" name="avatar" :size="16" />
          <span v-if="a.icon === 'whatsapp'" class="wbadge">31</span>
        </div>
      </div>
      <div class="tray">
        <Icon name="chevUp" :size="14" /><Icon name="sync" :size="18" /><Icon name="cloudOff" :size="18" />
        <div class="lang">ENG<br />US</div>
        <Icon name="wifi" /><Icon name="sound" /><Icon name="battery" :size="17" />
        <div class="clock">2:26 PM<br />2025-10-30</div>
      </div>
    </footer>
  </div>
</template>

<style>
body { margin: 0; overflow: hidden; background: #fcfcfc; }
</style>

<style scoped>
.screen { width: 1915px; height: 1199px; display: flex; flex-direction: column; overflow: hidden; font-family: "Open Sans", "Noto Sans", sans-serif; font-size: 12px; color: #3c4043; background: #fcfcfc; }
.screen * { box-sizing: border-box; }
.icon { flex: none; display: block; }
button { border: 0; padding: 0; font: inherit; color: inherit; }

/* browser tab strip */
.strip { height: 40px; background: #d3e2fd; display: flex; align-items: center; flex: none; }
.tab-search { margin-left: 4px; width: 28px; height: 28px; border-radius: 9px; background: #e9f0fe; display: flex; align-items: center; justify-content: center; color: #202124; }
.tabs-left { display: flex; margin-left: 3px; }
.btab { width: 56px; height: 16px; display: flex; align-items: center; border-right: 2px solid #a8c7fa; }
.tabs-left .btab:last-child { border-color: transparent; }
.tabs-right .btab { width: 55.03px; }
.fav { width: 20px; display: flex; justify-content: center; margin-left: 9px; flex: none; }
.lbl { white-space: nowrap; margin-left: 6px; line-height: 18px; color: #474747; letter-spacing: -.3px; }
.btab-active { position: relative; width: 49px; height: 34px; margin-top: 6px; background: #fff; border-radius: 9px 9px 0 0; display: flex; align-items: center; margin-left: 3px; color: #202124; }
.btab-active::before, .btab-active::after { content: ""; position: absolute; bottom: 0; width: 9px; height: 9px; }
.btab-active::before { left: -9px; background: radial-gradient(circle at 0 0, transparent 8.5px, #fff 9px); }
.btab-active::after { right: -9px; background: radial-gradient(circle at 100% 0, transparent 8.5px, #fff 9px); }
.btab-active .lbl { margin-left: 8px; width: 11px; margin-right: 8px; color: #222; }
.tabs-right { display: flex; margin-left: 3px; }
.new-tab { margin-left: 11px; color: #333; }
.win-ctl { display: flex; gap: 31px; margin-left: auto; margin-right: 13px; color: #111; align-items: center; }

/* toolbar */
.toolbar { height: 46px; display: flex; align-items: center; background: #fff; flex: none; color: #474747; }
.nav-btns { display: flex; gap: 20px; width: 118px; padding-left: 12px; align-items: center; }
.nav-btns .dim { color: #b0b0b0; }
.omni { width: 1590px; height: 34px; border-radius: 17px; background: #ecf0fa; display: flex; align-items: center; padding: 0 15px 0 5px; gap: 14px; }
.site { width: 24px; height: 24px; border-radius: 50%; background: #fff; display: flex; align-items: center; justify-content: center; }
.url { flex: 1; font-size: 14px; letter-spacing: -.35px; margin-left: -6px; color: #474747; margin-top: -1px; }
.url b { font-weight: 400; color: #1f1f1f; }
.ext { display: flex; margin-left: 8px; }
.cell { width: 36.500px; display: flex; justify-content: center; align-items: center; }
.wheel { width: 15px; height: 15px; border-radius: 50%; background: conic-gradient(#f03, #b0f, #00f 25%, #08f, #0c8 50%, #0c0, #cf0 75%, #f80, #f03); }
.vsep { width: 2px; height: 16px; background: #d3e2fd; border-radius: 1px; }
.ext + .vsep { margin-left: 6px; }
.ava { margin-left: 16px; }
.kebab { margin-left: 18px; }

/* bookmarks */
.bookmarks { height: 35px; padding-bottom: 7px; background: #fff; border-bottom: 1px solid #dcdcdc; display: flex; align-items: center; flex: none; color: #474747; }
.apps-grid { margin: 0 13px 0 9px; }
.bookmarks .vsep { margin-right: 15px; }
.bm { display: flex; align-items: center; gap: 8px; white-space: nowrap; letter-spacing: -.28px; flex: none; }
.bm-more { margin-left: 21px; }

/* workspace */
.work { display: flex; flex: 1; min-height: 0; font-family: Roboto, "Liberation Sans", sans-serif; color: #0d1116; }
.left { width: 752px; flex: none; }
.proj { height: 40px; display: flex; align-items: center; padding-left: 11px; }
.pchev { margin-left: 2px; }
.papp { margin-left: 16px; }
.pname { font-size: 14px; margin-left: 6.500px; }
.chip { width: 12px; height: 12px; margin-left: 15px; border: 2px solid #b5a8f3; border-radius: 2px; background: #5d6068; }
.chat-head { height: 30px; display: flex; align-items: center; padding: 6px 0 0 11px; font-size: 14px; }
.ctitle { margin-left: 103px; letter-spacing: .02px; }
.agent { display: flex; align-items: center; gap: 3px; margin-left: 4px; height: 24px; width: 67px; padding-left: 5px; border-radius: 12px; background: #ffe3cb; color: #7a3f07; font-size: 12px; white-space: nowrap; }
.newchat { margin-left: 88px; }
.msg { padding-left: 85px; width: 665px; font-size: 14px; letter-spacing: .04px; white-space: nowrap; }
.msg p { margin: 0; height: 24px; line-height: 24px; }
.msg b { font-weight: 600; letter-spacing: .25px; }
.msg .p1 b { letter-spacing: .08px; }
.msg ul, .msg ol { margin: 0; padding: 0; list-style: none; }
.msg ul li { height: 26.400px; line-height: 26.400px; display: flex; align-items: center; }
.msg ul li::before { content: ""; width: 5px; height: 5px; border-radius: 50%; background: #0d1116; margin-right: 11px; }
.l1 { margin-top: 14px !important; }
hr { border: 0; height: 1px; background: #ececee; margin: 0; }
.h1 { margin-top: 21px; }
.msg .p2 { margin-top: 23px; display: flex; align-items: center; padding-left: 3px; gap: 5.500px; }
.msg .p2 b { letter-spacing: .17px; }
.msg .p3 { height: 23px; line-height: 22.500px; }
.em { display: inline-block; width: 22.500px; font-size: 13px; padding-left: 1px; letter-spacing: 0; line-height: 16px; }
.em2 { font-size: 13px; margin-left: 1px; }
ol { padding-top: 13px !important; }
ol li { height: 26px; line-height: 26px; }
ol li:first-child, ol li:nth-child(2), .l3 { letter-spacing: .12px; }
code { font-family: "DejaVu Sans Mono", monospace; letter-spacing: 0; }
ol code { font-size: 13px; color: #8f4e0a; letter-spacing: -.01px; }
.code-line { height: 21px; line-height: 21px; padding-left: 20px; }
.l3 { margin-top: 5px; }
.l3 code { margin: 0 4px 0 5px; }
.codeblock { margin: 16px 0 0 16px; height: 45px; border-radius: 4px; background: #eff1f3; display: flex; align-items: center; padding: 0 12px; justify-content: space-between; }
.codeblock .icon { color: #5f646b; margin-top: -4px; }
.msg .p4 { margin-top: 3.500px; }
.msg .p5 { margin-top: 15px; }
.h2 { margin-top: 23px; }
.msg .p6 { margin-top: 22.500px; }
.msg .p7 { height: 20px; line-height: 20px; letter-spacing: .1px; }
.l2 { margin-top: 16px !important; }
.msg .p8 { margin-top: 12.800px; letter-spacing: .06px; }
.checkpoint { width: 592px; height: 94px; margin: 13.500px 0 0 79px; border-radius: 8px; background: #eff1f3; padding: 8px; }
.ck-top { display: flex; align-items: center; gap: 7px; height: 18px; color: #3e434a; letter-spacing: .06px; }
.ck-title { font-size: 14px; height: 32px; line-height: 34px; letter-spacing: .05px; }
.ck-btns { display: flex; gap: 8px; }
.ck-btns button { height: 28px; border-radius: 4px; background: #e3e5e8; padding: 0 9px; display: flex; align-items: center; gap: 4px; color: #3b4047; letter-spacing: .06px; }
.ck-btns .off { color: #999da3; padding-right: 10px; background: #e6e8ea; }
.worked { width: 592px; height: 34px; margin: 14px 0 0 79px; border-radius: 8px; background: #eff1f3; display: flex; align-items: center; padding: 0 11px 0 8px; color: #3e434a; }
.worked span { flex: 1; margin-left: 9px; }
.composer { width: 600px; height: 75px; margin: 22px 0 0 75px; border: 1px solid #b7bac0; border-radius: 6px; padding: 9px 10px 0; }
.ph { font-size: 14px; line-height: 19px; height: 34px; color: #63676e; letter-spacing: .08px; }
.c-row { display: flex; align-items: center; margin-left: -4px; color: #3e434a; }
.build { width: 80px; height: 24px; background: #eff1f3; border-radius: 4px; display: flex; align-items: center; padding-left: 5px; gap: 5px; color: #0d1116; white-space: nowrap; }
.cu { margin-left: 6px; }
.ci1 { margin-left: 7px; }
.ci2 { margin-left: 12px; }
.ci3 { margin-left: auto; margin-right: 17px; }
.ci4 { margin-right: 1px; margin-top: 2px; }

.right { flex: 1; display: flex; flex-direction: column; padding-right: 3px; min-width: 0; }
.ide-tabs { height: 40px; display: flex; align-items: center; gap: 4px; font-size: 14px; flex: none; }
.itab { width: 160px; height: 28px; border-radius: 4px; display: flex; align-items: center; padding: 0 10px 0 6px; gap: 6px; color: #5c6168; letter-spacing: .05px; }
.itab span { flex: 1; }
.itab > :last-child { color: #85898f; }
.itab.on { background: #eff1f3; color: #0d1116; }
.c-con { color: #6b5a1c; }
.c-db { color: #2a5f9e; }
.iplus { margin-left: 8px; color: #7a7e85; }
.iright { margin-left: auto; display: flex; align-items: center; margin-right: 5px; }
.iright > :nth-child(2) { margin: 0 10px 0 14px; }
.publish { width: 74px; height: 28px; border-radius: 4px; background: #6ab4ff; font-size: 12.500px; display: flex; align-items: center; justify-content: center; gap: 4px; margin-right: 9px; color: #06213f; }
.frame { width: 1160px; height: 985px; border: 1px solid #a6a9ad; border-radius: 5px; overflow: hidden; }
.fbar { height: 35px; display: flex; align-items: center; padding: 0 9px 2px 3px; gap: 4px; }
.sq { width: 24px; height: 24px; border-radius: 4px; background: #eff1f3; display: flex; align-items: center; justify-content: center; color: #6b6f76; }
.frel { margin: 0 4px; }
.faddr { width: 988px; height: 24px; border-radius: 4px; background: #eff1f3; display: flex; align-items: center; gap: 2px; padding-left: 4px; font-size: 13.500px; color: #5c6168; }
.faddr b { font-weight: 400; color: #0d1116; }
.ficons { display: flex; gap: 10px; margin-left: 4px; color: #5c6168; }
.page { height: 948px; padding: 20px 19px; background: linear-gradient(135deg, #10b981 0%, #059669 100%); font-family: "Noto Sans", "Open Sans", sans-serif; }
.card { height: 818px; background: #fff; border-radius: 12px; box-shadow: 0 20px 40px rgba(0, 0, 0, .2); overflow: hidden; }
.hero { height: 146px; background: linear-gradient(135deg, #10b981 0%, #059669 100%); color: #fff; text-align: center; padding-top: 31px; }
h1 { margin: 0; font-size: 40px; line-height: 54px; font-weight: 700; letter-spacing: -1.220px; white-space: nowrap; display: flex; justify-content: center; align-items: center; }
.hero-em { margin-right: 19px; }
.hero p { margin: 8px 0 0; font-size: 17.600px; line-height: 24px; letter-spacing: -.53px; opacity: .9; }
.nav { height: 53px; display: flex; background: #f0fdf4; border-bottom: 2px solid #ddd; font-family: "Liberation Sans", Arial, sans-serif; font-size: 16px; color: #333; }
.nav a { flex: 1; text-align: center; line-height: 51px; white-space: nowrap; }
.nav a.on { background: #fff; color: #10b981; border-bottom: 3px solid #10b981; line-height: 48px; }
.body { padding: 30px; }
.stats { display: grid; grid-template-columns: repeat(3, 1fr); gap: 20px; }
.stat { height: 133px; border-radius: 10px; background: linear-gradient(135deg, #10b981, #059669); color: #fff; text-align: center; padding-top: 25px; }
h3 { margin: 0; font-size: 14px; line-height: 22px; opacity: .9; letter-spacing: -.17px; }
.num { font-size: 40px; line-height: 54px; font-weight: 700; margin-top: 9px; letter-spacing: -.9px; }
.proc { display: flex; justify-content: center; margin: 30px 15px 30px 0; }
.proc button { width: 205px; height: 42px; border-radius: 5px; background: linear-gradient(135deg, #10b981, #059669); color: #fff; font: 700 16px "Liberation Sans", Arial, sans-serif; padding-bottom: 1px; }
.summ { height: 304px; border: 1px solid #ddd; border-radius: 8px; background: #f0fdf4; padding: 20px; }
.s-head { display: flex; justify-content: space-between; height: 67px; }
h2 { margin: 0; font-size: 24px; line-height: 34px; color: #333; letter-spacing: -.68px; }
.mb { display: flex; gap: 10px; margin-top: 6px; height: 36px; align-items: center; color: #333; }
.mb label { font-size: 16px; font-weight: 600; letter-spacing: -.5px; }
.sel { width: 200px; height: 36px; border: 1px solid #ddd; border-radius: 4px; background: #fff; display: flex; align-items: center; justify-content: space-between; padding: 0 3px 0 16px; font: 14px "Liberation Sans", Arial, sans-serif; letter-spacing: .06px; color: #111; }
.row { width: 336px; height: 47px; border-radius: 5px; margin-bottom: 15px; color: #fff; font: 700 16px "Liberation Sans", Arial, sans-serif; display: flex; align-items: center; white-space: nowrap; }
.high { background: linear-gradient(135deg, #ef4444, #dc2626); }
.imp { background: linear-gradient(135deg, #f59e0b, #d97706); }
.sec { height: 56px; background: linear-gradient(135deg, #f59e0b, #ef4444); font-size: 13.300px; }
.dot { width: 15px; height: 16px; border-radius: 50%; margin-left: 28px; background: radial-gradient(circle at 65% 35%, #fb5277, #c8324a 60%, #a02f4a); }
.imp .dot { background: radial-gradient(circle at 65% 35%, #ff9838, #f9683f 60%, #ef5d66); }
.rt { margin-left: 8px; width: 180px; padding-top: 1px; }
.imp .rt { width: 173px; }
.cnt { width: 39px; height: 23px; border-radius: 12px; background: rgba(255, 255, 255, .3); font-size: 14px; display: flex; align-items: center; justify-content: center; }
.imp .cnt { width: 31px; }
.arr { border: 5px solid transparent; border-top: 10px solid #fff; border-bottom: 0; margin-left: 30px; }
.imp .arr { margin-left: 44px; }
.sec-t { margin-left: 25px; width: 155px; letter-spacing: -.08px; }
.s1, .s2 { display: flex; align-items: center; height: 15px; }
.s1 { position: relative; top: 1px; }
.s2 { margin-top: 1px; }
.warn { font-size: 11px; width: 23px; padding-left: 3px; letter-spacing: 0; }
.sec .cnt { width: 30px; height: 20px; margin-left: 4px; font-size: 12px; }
.sec .arr { margin-left: 6px; border-width: 9px 4.500px 0; }
.sec button { width: 131px; height: 32px; border-radius: 4px; background: #ef4444; color: #fff; font-weight: 400; font-size: 14px; }

/* taskbar */
.taskbar { height: 47px; flex: none; background: #cfe5ec; border-top: 1px solid #a9b4b9; display: flex; align-items: center; color: #1b1b1b; }
.weather { width: 368px; display: flex; align-items: center; padding-left: 15px; gap: 6px; line-height: 16px; }
.weather b { display: block; font-weight: 400; letter-spacing: -.5px; }
.weather span { color: #4b5458; letter-spacing: -.2px; }
.wic { position: relative; width: 28px; height: 30px; display: flex; align-items: flex-end; }
.wic em { position: absolute; right: -1px; top: -3px; width: 16px; height: 16px; border-radius: 50%; background: #c42b1c; color: #fff; font-style: normal; font-size: 11px; display: flex; align-items: center; justify-content: center; }
.start { width: 37px; }
.tsearch { width: 218px; height: 31px; border-radius: 16px; background: #f1f7fa; border: 1px solid #c3d3d9; border-bottom-color: #a9b8be; display: flex; align-items: center; padding-left: 8px; gap: 8px; font-size: 14px; color: #5a6266; letter-spacing: -.5px; }
.tsearch .icon { color: #1b1b1b; }
.tv { width: 47px; padding-left: 13px; }
.apps { display: flex; }
.app { position: relative; width: 44px; height: 47px; display: flex; align-items: center; justify-content: center; }
.app.run::after { content: ""; position: absolute; bottom: 3px; left: 19px; width: 6px; height: 3px; border-radius: 2px; background: #7b8589; }
.app.active { background: linear-gradient(#eaf4f7, #eaf4f7) 3px 5px / 38px 38px no-repeat; }
.app.active::after { content: ""; position: absolute; bottom: 3px; left: 14px; width: 16px; height: 3px; border-radius: 2px; background: #1c7a8c; }
.prof { position: absolute; right: 5px; top: 4px; }
.wbadge { position: absolute; right: 3px; top: 4px; width: 19px; height: 19px; border-radius: 50%; background: #1d7488; color: #fff; display: flex; align-items: center; justify-content: center; font-size: 11px; letter-spacing: -.3px; }
.tray { margin-left: auto; display: flex; align-items: center; margin-right: 16px; }
.tray > :nth-child(2) { margin-left: 16px; }
.tray > :nth-child(3) { margin-left: 14px; }
.lang { width: 40px; text-align: center; line-height: 16px; margin: 0 10px 0 8px; letter-spacing: -.3px; }
.tray > :nth-child(6) { margin-left: 8px; }
.tray > :nth-child(7) { margin-left: 8px; }
.clock { width: 78px; text-align: right; line-height: 16px; }
</style>
